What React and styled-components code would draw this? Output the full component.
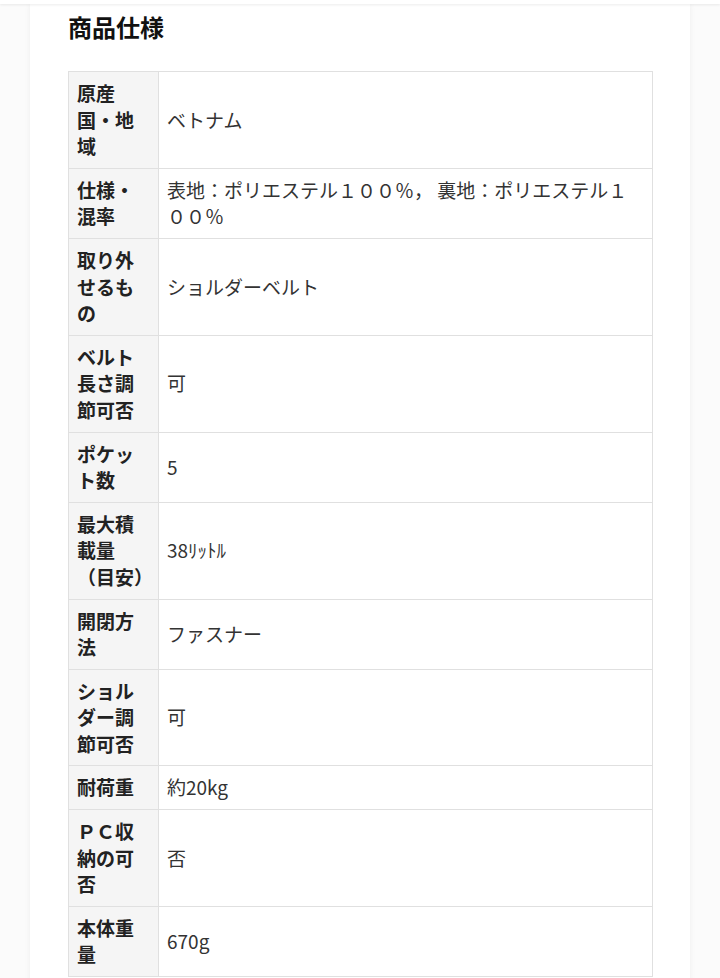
import React from 'react';
import { styled, createGlobalStyle } from 'styled-components';

const GlobalStyle = createGlobalStyle`
  html, body {
    margin: 0;
    padding: 0;
    background: #fbfbfb;
  }
  body {
    font-family: "Noto Sans CJK JP", "Noto Sans", sans-serif;
    color: #333;
  }
`;

const specs = [
  { label: '原産国・地域', value: 'ベトナム' },
  { label: '仕様・混率', value: '表地：ポリエステル１００％， 裏地：ポリエステル１００％' },
  { label: '取り外せるもの', value: 'ショルダーベルト' },
  { label: 'ベルト長さ調節可否', value: '可' },
  { label: 'ポケット数', value: '5' },
  { label: '最大積載量', note: '（目安）', value: '38ﾘｯﾄﾙ' },
  { label: '開閉方法', value: 'ファスナー' },
  { label: 'ショルダー調節可否', value: '可' },
  { label: '耐荷重', value: '約20kg' },
  { label: 'ＰＣ収納の可否', value: '否' },
  { label: '本体重量', value: '670g' },
];

const App = () => {
  const rows = specs.map((spec, index) => (
    <Row key={index}>
      <Label>
        {spec.label}
        {spec.note && <NoWrap>{spec.note}</NoWrap>}
      </Label>
      <Value>{spec.value}</Value>
    </Row>
  ));

  return (
    <>
      <GlobalStyle />
      <TopBar />
      <Card>
        <Title>商品仕様</Title>
        <SpecTable>
          <colgroup>
            <LabelCol />
            <col />
          </colgroup>
          <tbody>{rows}</tbody>
        </SpecTable>
      </Card>
    </>
  );
};

export default App;

const TopBar = styled.div`
  height: 4px;
  background: #fff;
  box-shadow: 0 1px 3px rgba(0, 0, 0, 0.08);
  position: relative;
  z-index: 1;
`;

const Card = styled.main`
  margin: 0 30px;
  padding: 4px 38px 40px;
  background: #fff;
  box-shadow: 0 0 6px rgba(0, 0, 0, 0.06);
  min-height: 974px;
  box-sizing: border-box;
`;

const Title = styled.h2`
  margin: 0 0 25px;
  font-size: 24px;
  line-height: 38px;
  font-weight: 700;
  color: #111;
`;

const SpecTable = styled.table`
  width: 585px;
  table-layout: fixed;
  border-collapse: collapse;
  font-size: 19px;
  line-height: 26.6px;
`;

const LabelCol = styled.col`
  width: 90px;
`;

const Row = styled.tr``;

const Label = styled.th`
  padding: 8px 16px 8px 8px;
  background: #f5f5f5;
  border: 1px solid #e0e0e0;
  text-align: left;
  vertical-align: middle;
  font-weight: 700;
  color: #222;
`;

const NoWrap = styled.span`
  white-space: nowrap;
`;

const Value = styled.td`
  padding: 8px;
  border: 1px solid #e0e0e0;
  vertical-align: middle;
  color: #333;
`;
